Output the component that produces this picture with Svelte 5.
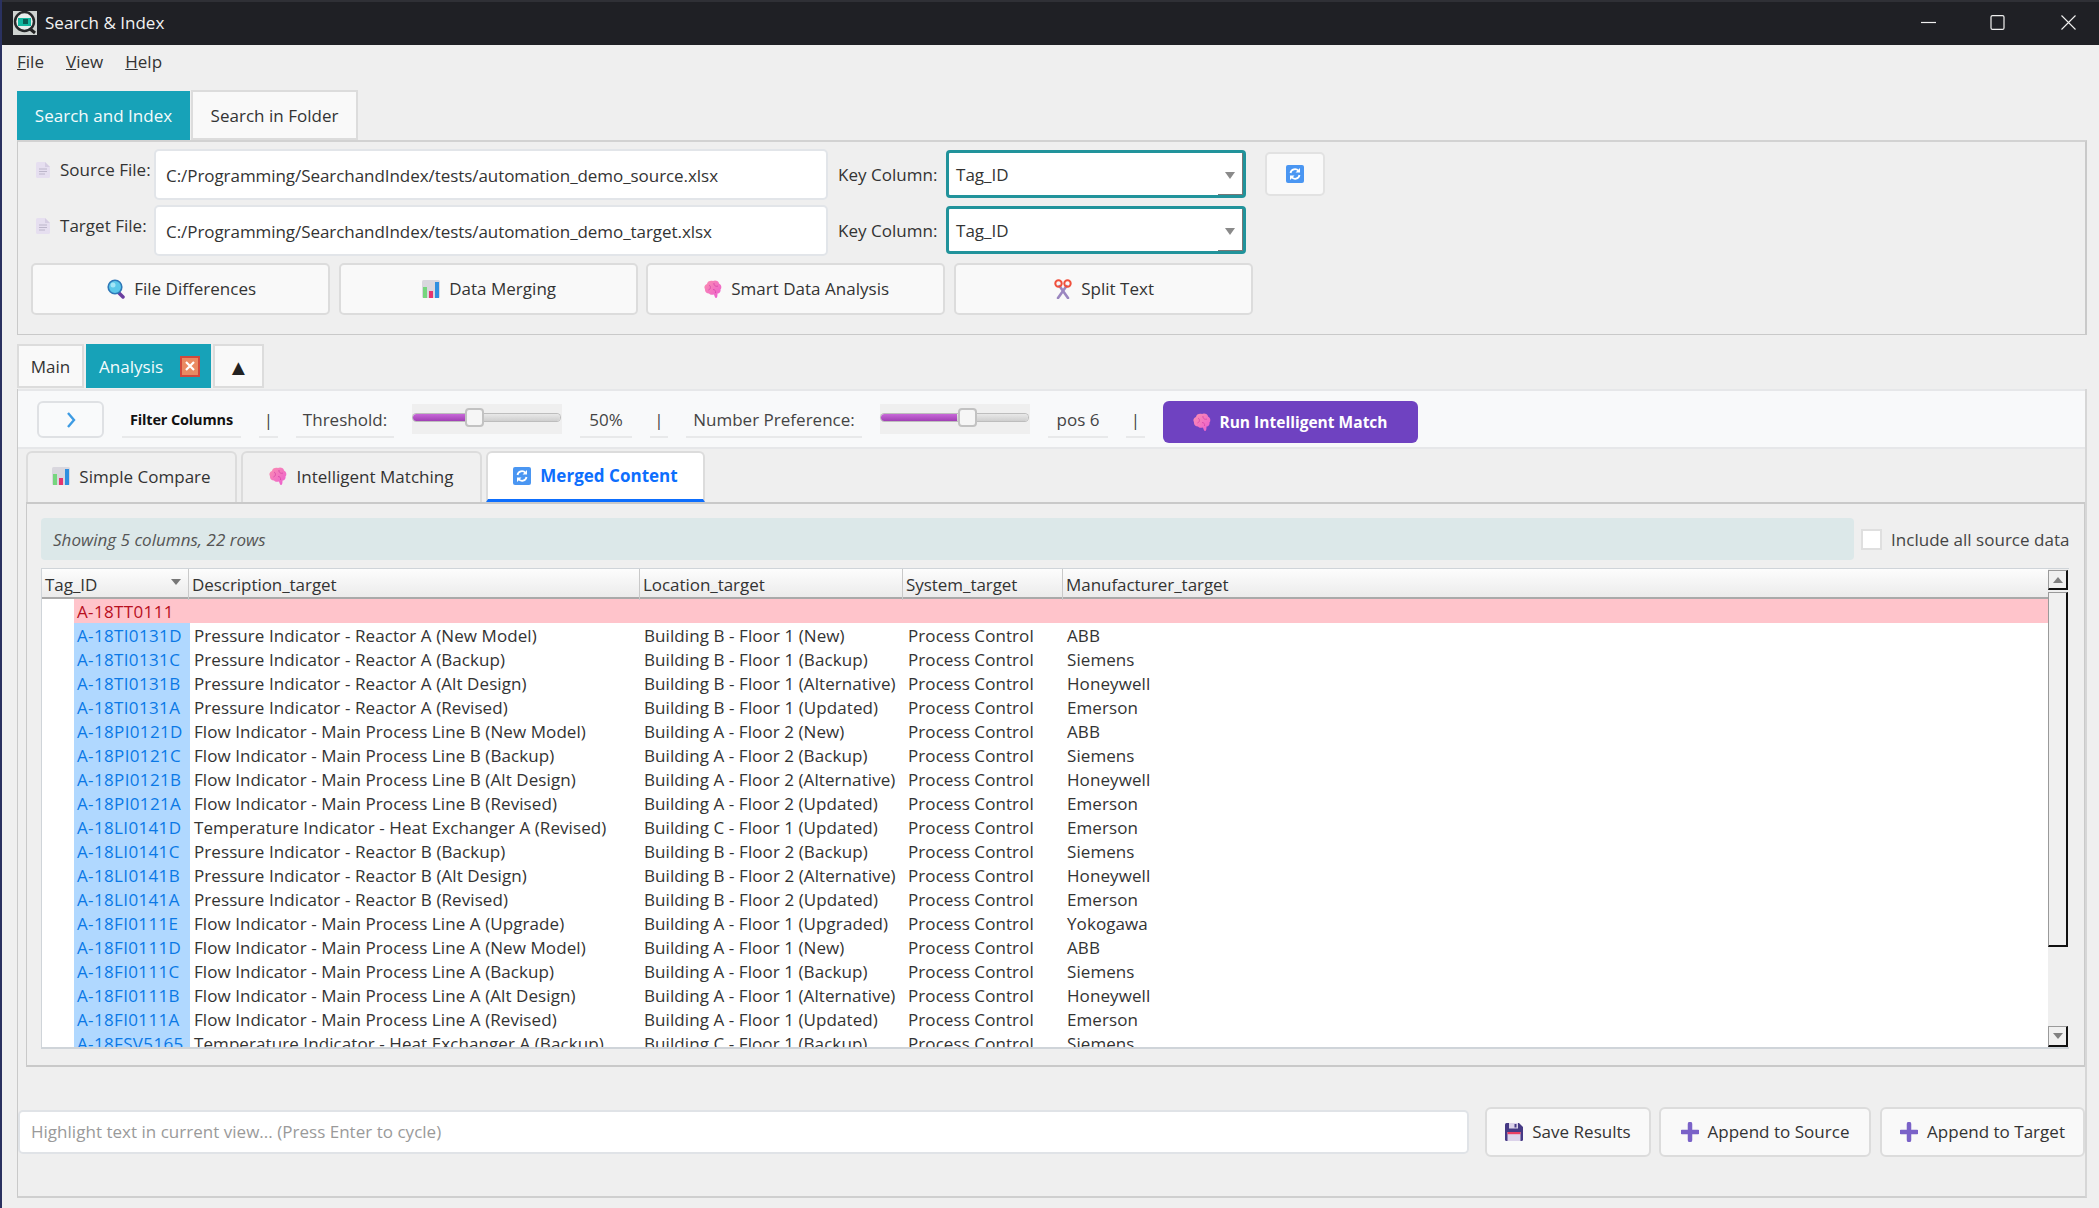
<script>
  const rows = [
    ['A-18TI0131D','Pressure Indicator - Reactor A (New Model)','Building B - Floor 1 (New)','Process Control','ABB'],
    ['A-18TI0131C','Pressure Indicator - Reactor A (Backup)','Building B - Floor 1 (Backup)','Process Control','Siemens'],
    ['A-18TI0131B','Pressure Indicator - Reactor A (Alt Design)','Building B - Floor 1 (Alternative)','Process Control','Honeywell'],
    ['A-18TI0131A','Pressure Indicator - Reactor A (Revised)','Building B - Floor 1 (Updated)','Process Control','Emerson'],
    ['A-18PI0121D','Flow Indicator - Main Process Line B (New Model)','Building A - Floor 2 (New)','Process Control','ABB'],
    ['A-18PI0121C','Flow Indicator - Main Process Line B (Backup)','Building A - Floor 2 (Backup)','Process Control','Siemens'],
    ['A-18PI0121B','Flow Indicator - Main Process Line B (Alt Design)','Building A - Floor 2 (Alternative)','Process Control','Honeywell'],
    ['A-18PI0121A','Flow Indicator - Main Process Line B (Revised)','Building A - Floor 2 (Updated)','Process Control','Emerson'],
    ['A-18LI0141D','Temperature Indicator - Heat Exchanger A (Revised)','Building C - Floor 1 (Updated)','Process Control','Emerson'],
    ['A-18LI0141C','Pressure Indicator - Reactor B (Backup)','Building B - Floor 2 (Backup)','Process Control','Siemens'],
    ['A-18LI0141B','Pressure Indicator - Reactor B (Alt Design)','Building B - Floor 2 (Alternative)','Process Control','Honeywell'],
    ['A-18LI0141A','Pressure Indicator - Reactor B (Revised)','Building B - Floor 2 (Updated)','Process Control','Emerson'],
    ['A-18FI0111E','Flow Indicator - Main Process Line A (Upgrade)','Building A - Floor 1 (Upgraded)','Process Control','Yokogawa'],
    ['A-18FI0111D','Flow Indicator - Main Process Line A (New Model)','Building A - Floor 1 (New)','Process Control','ABB'],
    ['A-18FI0111C','Flow Indicator - Main Process Line A (Backup)','Building A - Floor 1 (Backup)','Process Control','Siemens'],
    ['A-18FI0111B','Flow Indicator - Main Process Line A (Alt Design)','Building A - Floor 1 (Alternative)','Process Control','Honeywell'],
    ['A-18FI0111A','Flow Indicator - Main Process Line A (Revised)','Building A - Floor 1 (Updated)','Process Control','Emerson'],
    ['A-18FSV5165','Temperature Indicator - Heat Exchanger A (Backup)','Building C - Floor 1 (Backup)','Process Control','Siemens']
  ];
  const headers = ['Description_target','Location_target','System_target','Manufacturer_target'];
  const fields = [
    { label: 'Source File:', path: 'C:/Programming/SearchandIndex/tests/automation_demo_source.xlsx' },
    { label: 'Target File:', path: 'C:/Programming/SearchandIndex/tests/automation_demo_target.xlsx' }
  ];
  const threshold = 36;
  const preference = 52;
</script>

{#snippet doc()}
  <svg class="i-doc" viewBox="0 0 14 16"><path d="M0 1.500Q0 0 1.500 0H9L14 5V14.500Q14 16 12.500 16H1.500Q0 16 0 14.500Z" fill="#e6dff0"/><path d="M9 0L14 5H9Z" fill="#d5cde2"/><path d="M3 7H11M3 9.500H11M3 12H9" stroke="#bcb6ca" stroke-width="1"/></svg>
{/snippet}
{#snippet search()}
  <svg class="ic" viewBox="0 0 18 20"><path d="M11 13L16 18" stroke="#6b3fa0" stroke-width="3.500" stroke-linecap="round"/><circle cx="8" cy="8" r="6.800" fill="#5cc8ea" stroke="#2f78b8" stroke-width="1.600"/><circle cx="6" cy="6" r="2.500" fill="#a5e6f7"/></svg>
{/snippet}
{#snippet chart()}
  <svg class="ic" viewBox="0 0 18 20"><rect x="0" y="1" width="18" height="18" rx="1.500" fill="#d9d7de"/><rect x="1" y="8" width="4" height="11" fill="#76d67e"/><rect x="7" y="12" width="4" height="7" fill="#e5356f"/><rect x="13" y="3" width="4" height="16" fill="#2f8fe0"/></svg>
{/snippet}
{#snippet brain()}
  <svg class="ic" viewBox="0 0 18 20"><defs><linearGradient id="bg" x1="0" y1="0" x2="1" y2="1"><stop offset="0" stop-color="#fb8fb0"/><stop offset="1" stop-color="#ec5cd0"/></linearGradient></defs><path d="M3 5C3 2 7 1 9 2C11 .5 15 2 15 4.500C17.500 5.500 18 9 16.500 10.500C17 13 15 15 13.500 14.500C13.500 16.500 13.500 19 12 19C11 19 10.500 17 10 15.500C8 16 6 16 5 14.500C2.500 14.500 .5 12 1 10C-.5 8 1 5.500 3 5Z" fill="url(#bg)"/><path d="M5 6C7 7 7 10 4.500 11M10 4C9.500 6.500 12 8 14 7M9 10.500C11 10.500 12 12 11.500 14" stroke="#d849a8" fill="none" stroke-width=".9"/></svg>
{/snippet}
{#snippet scissors()}
  <svg class="ic" viewBox="0 0 18 20"><path d="M5.500 7L14 19M12.500 7L4 19" stroke="#9b87c0" stroke-width="2.600" stroke-linecap="round"/><circle cx="4.500" cy="4.500" r="3.200" fill="none" stroke="#f0503c" stroke-width="2"/><circle cx="13.500" cy="4.500" r="3.200" fill="none" stroke="#f0503c" stroke-width="2"/></svg>
{/snippet}
{#snippet refresh()}
  <svg class="ic" viewBox="0 0 18 20"><rect y="1" width="18" height="18" rx="2" fill="#4a96f2"/><path d="M4.500 9A4.500 4.500 0 0 1 12.500 7M13.500 11A4.500 4.500 0 0 1 5.500 13" fill="none" stroke="#fff" stroke-width="1.800"/><path d="M14 4V8.500H9.500ZM4 16V11.500H8.500Z" fill="#fff"/></svg>
{/snippet}
{#snippet save()}
  <svg class="ic" viewBox="0 0 18 20"><path d="M0 2.500Q0 1 1.500 1H14L18 5V17.500Q18 19 16.500 19H1.500Q0 19 0 17.500Z" fill="#463a85"/><rect x="4" y="1" width="9" height="5.500" fill="#dcd3ea"/><rect x="9.500" y="2" width="2" height="3.500" fill="#463a85"/><rect x="2.500" y="10" width="13" height="9" fill="#dcd3ea"/><rect x="2.500" y="10" width="13" height="2.200" fill="#ea3f63"/></svg>
{/snippet}
{#snippet plus()}
  <svg class="ic" viewBox="0 0 18 20"><path d="M9 2V18M1 10H17" stroke="#7a62c8" stroke-width="4.500" stroke-linecap="round"/></svg>
{/snippet}

<div class="win">
  <header class="titlebar">
    <svg class="appicon" viewBox="0 0 24 24"><rect width="24" height="24" fill="#cfd3d1"/><path d="M16 17L22 22" stroke="#222" stroke-width="3"/><circle cx="11.500" cy="10.500" r="9.500" fill="#e8eeec" stroke="#26282a" stroke-width="2.500"/><path d="M5 7H18V15H5Z" fill="#12b8a0"/><rect x="10" y="8" width="5" height="5" fill="#0c5f55"/></svg>
    <span class="apptitle">Search &amp; Index</span>
    <div class="controls">
      <svg viewBox="0 0 15 15"><path d="M0 7.500H15" stroke="#f0f0f0" stroke-width="1.200"/></svg>
      <svg viewBox="0 0 15 15"><rect x="1" y=".6" width="13" height="13.800" rx="1.500" fill="none" stroke="#f0f0f0" stroke-width="1.200"/></svg>
      <svg viewBox="0 0 15 15"><path d="M.5 .5L14.500 14.500M14.500 .5L.5 14.500" stroke="#f0f0f0" stroke-width="1.100"/></svg>
    </div>
  </header>

  <nav class="menubar">
    <span><u>F</u>ile</span><span><u>V</u>iew</span><span><u>H</u>elp</span>
  </nav>

  <main class="main">
    <div class="toptabs">
      <div class="tab on t1">Search and Index</div>
      <div class="tab t2">Search in Folder</div>
    </div>

    <section class="toppanel">
      <div class="fields">
        {#each fields as f, n}
          <div class="flabel">{@render doc()}<span>{f.label}</span></div>
          <div class="input">{f.path}</div>
          <div class="keylabel">Key Column:</div>
          <div class="select"><span>Tag_ID</span><i class="caret"></i></div>
          {#if n === 0}
            <div class="refresh">{@render refresh()}</div>
          {:else}
            <div></div>
          {/if}
        {/each}
      </div>
      <div class="actions">
        <div class="btn">{@render search()}File Differences</div>
        <div class="btn">{@render chart()}Data Merging</div>
        <div class="btn">{@render brain()}Smart Data Analysis</div>
        <div class="btn">{@render scissors()}Split Text</div>
      </div>
    </section>

    <div class="midtabs">
      <div class="tab m1">Main</div>
      <div class="tab on m2"><span>Analysis</span><b class="close"><svg viewBox="0 0 12 12"><path d="M2 2L10 10M10 2L2 10" stroke="#fff" stroke-width="2.200"/></svg></b></div>
      <div class="tab m3">▲</div>
    </div>

    <section class="lower">
      <div class="toolbar">
        <div class="chev"><svg viewBox="0 0 10 18"><path d="M2 2L8 9L2 16" fill="none" stroke="#3d9be3" stroke-width="2.400"/></svg></div>
        <div class="tl bold" style="width:119px">Filter Columns</div>
        <div class="tl" style="width:19px">|</div>
        <div class="tl" style="width:98px">Threshold:</div>
        <div class="slider"><div class="groove"><div class="fill" style="width:{threshold}%"></div><div class="handle" style="left:calc({threshold}% - 1px)"></div></div></div>
        <div class="tl" style="width:52px">50%</div>
        <div class="tl" style="width:18px">|</div>
        <div class="tl" style="width:176px">Number Preference:</div>
        <div class="slider"><div class="groove"><div class="fill" style="width:{preference}%"></div><div class="handle" style="left:calc({preference}% + 1px)"></div></div></div>
        <div class="tl" style="width:60px">pos 6</div>
        <div class="tl" style="width:19px">|</div>
        <div class="run">{@render brain()}Run Intelligent Match</div>
      </div>

      <div class="subtabs">
        <div class="sub s1">{@render chart()}Simple Compare</div>
        <div class="sub s2">{@render brain()}Intelligent Matching</div>
        <div class="sub s3 act">{@render refresh()}Merged Content</div>
      </div>

      <div class="inner">
        <div class="inforow">
          <div class="info">Showing 5 columns, 22 rows</div>
          <div class="check"></div>
          <div class="checklabel">Include all source data</div>
        </div>

        <div class="table">
          <div class="tmain">
            <div class="thead">
              <div class="th tag"><span>Tag_ID</span><i class="sort"></i></div>
              {#each headers as h}<div class="th">{h}</div>{/each}
            </div>
            <div class="tbody">
              <div class="tr miss"><div></div><div class="td id">A-18TT0111</div><div></div><div></div><div></div><div></div></div>
              {#each rows as r}
                <div class="tr">
                  <div></div>
                  <div class="td id blue">{r[0]}</div>
                  <div class="td">{r[1]}</div>
                  <div class="td">{r[2]}</div>
                  <div class="td">{r[3]}</div>
                  <div class="td">{r[4]}</div>
                </div>
              {/each}
            </div>
          </div>
          <div class="scroll">
            <div class="sbtn up"><i></i></div>
            <div class="thumb"></div>
            <div class="track"></div>
            <div class="sbtn down"><i></i></div>
          </div>
        </div>
      </div>

      <div class="bottom">
        <div class="hl">Highlight text in current view... (Press Enter to cycle)</div>
        <div class="bbtn b1">{@render save()}Save Results</div>
        <div class="bbtn b2">{@render plus()}Append to Source</div>
        <div class="bbtn b3">{@render plus()}Append to Target</div>
      </div>
    </section>
  </main>
</div>

<style>
  :global(body) { margin: 0; background: #efefef; }
  .win {
    width: 2099px; height: 1208px; box-sizing: border-box; overflow: hidden;
    border-left: 2px solid #2a3160; background: #efefef; display: flex; flex-direction: column;
    font-family: "Open Sans", "Noto Sans", sans-serif; font-size: 17px; letter-spacing: .02px; color: #333;
  }
  .titlebar {
    height: 45px; box-sizing: border-box; flex: none; background: #1f2025; border-top: 2px solid #2f3036;
    display: flex; align-items: center; padding: 0 23px 2px 13px; margin-left: -2px; color: #f2f2f2;
  }
  .appicon { width: 24px; height: 24px; }
  .apptitle { margin-left: 8px; font-size: 17px; }
  .controls { margin-left: auto; display: flex; gap: 54px; }
  .controls svg { width: 15px; height: 15px; display: block; }
  .controls svg:nth-child(2) { margin-right: 2px; }
  .menubar { height: 45px; box-sizing: border-box; flex: none; display: flex; padding: 6px 0 0 15px; gap: 22px; line-height: 22px; color: #333; }
  .main { flex: 1; min-height: 0; display: flex; flex-direction: column; padding: 0 12px 0 15px; }

  .tab { box-sizing: border-box; display: flex; align-items: center; justify-content: center; background: #f9f9f9; border: 2px solid #dcdcdc; color: #333; }
  .tab.on { background: #17a2b8; border-color: #17a2b8; color: #f4fbfc; }
  .toptabs { display: flex; gap: 1px; height: 50px; flex: none; }
  .t1 { width: 173px; height: 49px; margin-top: 1px; }
  .t2 { width: 167px; }

  .toppanel { box-sizing: border-box; height: 195px; flex: none; border: 1px solid #c9c9c9; border-top: 2px solid #d2d2d2; border-right-width: 2px; padding-top: 7px; }
  .fields { display: grid; grid-template-columns: 136px 674px 118px 300px 78px; grid-auto-rows: 51px; row-gap: 5px; }
  .flabel { display: flex; gap: 10px; padding-left: 18px; padding-top: 10px; line-height: 22px; }
  .i-doc { width: 14px; height: 16px; margin-top: 3px; flex: none; }
  .input { box-sizing: border-box; background: #fff; border: 2px solid #e2e5e9; border-radius: 5px; padding: 14px 0 0 10px; line-height: 22px; white-space: nowrap; letter-spacing: -.06px; }
  .keylabel { padding: 15px 0 0 10px; line-height: 22px; }
  .select { position: relative; box-sizing: border-box; height: 48px; margin-top: 1px; background: #fff; border: 3px solid #21939b; border-radius: 4px; padding: 11px 0 0 7px; line-height: 22px; }
  .select::after { content: ""; position: absolute; right: 0; bottom: 0; top: 0; width: 24px; border-right: 1px solid #777; border-bottom: 1px solid #777; }
  .caret { position: absolute; right: 8px; top: 19px; border-left: 5.500px solid transparent; border-right: 5.500px solid transparent; border-top: 7px solid #8a8a8a; }
  .refresh { box-sizing: border-box; width: 60px; height: 44px; margin: 3px 0 0 19px; background: #f9f9f9; border: 2px solid #e2e2e2; border-radius: 5px; display: flex; align-items: center; justify-content: center; }
  .ic { width: 18px; height: 20px; flex: none; }
  .actions { display: grid; grid-template-columns: repeat(4, 299.250px); column-gap: 8.250px; padding-left: 13px; margin-top: 7px; }
  .btn { box-sizing: border-box; height: 52px; display: flex; align-items: center; justify-content: center; gap: 9px; background: #f9f9f9; border: 2px solid #dcdcdc; border-radius: 5px; padding: 0 0 1px 2px; }

  .midtabs { display: flex; gap: 2px; height: 44px; margin-top: 9px; flex: none; }
  .m1 { width: 67px; }
  .m2 { width: 125px; justify-content: flex-start; padding-left: 11px; gap: 17px; }
  .m3 { width: 51px; color: #222; font-size: 22px; }
  .close { width: 20px; height: 21px; box-sizing: border-box; background: #ea8a62; border: 2px solid #d2493c; display: flex; align-items: center; justify-content: center; }
  .close svg { width: 12px; height: 12px; }

  .lower { flex: none; height: 809px; margin-top: 1px; box-sizing: border-box; border-left: 1px solid #c9c9c9; border-bottom: 2px solid #cfcfcf; border-right: 2px solid #d6d6d6; display: flex; flex-direction: column; }
  .toolbar { box-sizing: border-box; height: 60px; flex: none; background: #f8f9fa; border-top: 2px solid #e6e7e9; border-bottom: 2px solid #e6e7e9; display: flex; gap: 18px; padding: 10px 0 0 19px; align-items: flex-start; }
  .chev { box-sizing: border-box; width: 67px; height: 37px; background: #f9fafb; border: 2px solid #dfe1e4; border-radius: 6px; display: flex; align-items: center; justify-content: center; }
  .chev svg { width: 10px; height: 18px; }
  .tl { box-sizing: border-box; height: 37px; border-bottom: 2px solid #e8e9ea; text-align: center; line-height: 37px; color: #444; flex: none; white-space: nowrap; }
  .tl.bold { font-weight: 700; color: #111; font-size: 14.500px; letter-spacing: -.15px; }
  .slider { box-sizing: border-box; width: 150px; height: 30px; margin-top: 3px; background: #efefef; padding: 10px 2px 0 1px; flex: none; }
  .groove { position: relative; height: 7px; border-radius: 4px; background: linear-gradient(#e8e8e8, #cfcfcf); box-shadow: 0 0 0 1px #bdbdbd; }
  .fill { height: 100%; border-radius: 4px 0 0 4px; background: linear-gradient(#c868d8, #a040b4); }
  .handle { position: absolute; top: -6px; width: 19px; height: 19px; box-sizing: border-box; background: #f6f6f6; border: 2px solid #c2c2c2; border-radius: 4px; }
  .run { box-sizing: border-box; width: 255px; height: 42px; background: #6f42c1; border-radius: 6px; color: #fff; font-weight: 700; font-size: 15.500px; display: flex; align-items: center; justify-content: center; gap: 8px; flex: none; }

  .subtabs { display: flex; gap: 4px; height: 53px; flex: none; padding: 2px 0 0 8px; box-sizing: border-box; }
  .sub { box-sizing: border-box; display: flex; align-items: center; justify-content: center; gap: 9px; background: #f0f0f0; border: 2px solid #dcdcdc; border-bottom: none; border-radius: 6px 6px 0 0; padding-bottom: 3px; }
  .s1 { width: 211px; } .s2 { width: 241px; } .s3 { width: 219px; }
  .act { background: #fff; color: #0d6efd; font-weight: 700; border-bottom: 3px solid #0d6efd; padding-bottom: 1px; }

  .inner { box-sizing: border-box; height: 565px; flex: none; margin-left: 8px; border: 1px solid #c9c9c9; border-top-width: 2px; border-bottom-width: 2px; padding: 14px 16px 0 14px; display: flex; flex-direction: column; }
  .inforow { display: flex; align-items: center; height: 42px; flex: none; }
  .info { box-sizing: border-box; width: 1813px; height: 42px; background: #dce8e9; border-radius: 4px; padding-left: 12px; line-height: 43px; font-style: italic; color: #555; flex: none; }
  .check { box-sizing: border-box; width: 21px; height: 21px; margin-left: 7px; background: #fff; border: 2px solid #dfdfdf; flex: none; }
  .checklabel { margin-left: 9px; color: #444; white-space: nowrap; }

  .table { margin-top: 8px; height: 481px; flex: none; display: flex; border-left: 1px solid #cfd4d9; border-bottom: 2px solid #cfd4d9; border-top: 1px solid #cfd4d9; box-sizing: border-box; background: #fff; width: 2028px; }
  .tmain { width: 2006px; flex: none; display: flex; flex-direction: column; overflow: hidden; }
  .thead { display: grid; grid-template-columns: 147px 451px 263px 160px 1fr; height: 30px; flex: none; box-sizing: border-box; border-bottom: 2px solid #a9a9a9; background: linear-gradient(#fdfdfd, #ebebeb); }
  .th { box-sizing: border-box; border-right: 1px solid #c9c9c9; padding-left: 3px; line-height: 31px; position: relative; color: #333; letter-spacing: -.05px; }
  .th:last-child { border-right: none; }
  .sort { position: absolute; right: 7px; top: 10px; border-left: 5.500px solid transparent; border-right: 5.500px solid transparent; border-top: 6px solid #777; }
  .tbody { flex: 1; min-height: 0; overflow: hidden; }
  .tr { display: grid; grid-template-columns: 32px 116px 450px 264px 159px 1fr; height: 24px; line-height: 26px; letter-spacing: .08px; }
  .td { box-sizing: border-box; padding-left: 4px; white-space: nowrap; color: #333; overflow: hidden; height: 24px; }
  .td.id { padding-left: 3px; letter-spacing: .35px; }
  .miss { background: linear-gradient(90deg, #fff 32px, #ffc4cb 32px); height: 25px; margin-top: -1px; padding-top: 1px; box-sizing: border-box; }
  .miss .id { color: #b80f1e; }
  .blue { background: #b0d8ff; color: #0a78e6; }

  .scroll { width: 21px; flex: none; background: #efefef; display: flex; flex-direction: column; }
  .sbtn { box-sizing: border-box; width: 20px; flex: none; background: #f0f0f0; border-top: 1px solid #9a9a9a; border-left: 1px solid #9a9a9a; border-right: 2px solid #111; border-bottom: 2px solid #111; display: flex; align-items: center; justify-content: center; }
  .up { height: 20px; margin-top: 1px; }
  .down { height: 21px; }
  .sbtn i { border-left: 5px solid transparent; border-right: 5px solid transparent; }
  .up i { border-bottom: 6px solid #808080; }
  .down i { border-top: 6px solid #808080; }
  .thumb { box-sizing: border-box; width: 20px; height: 355px; margin-top: 2px; flex: none; background: #f0f0f0; border-top: 1px solid #9a9a9a; border-left: 1px solid #9a9a9a; border-right: 2px solid #111; border-bottom: 2px solid #111; }
  .track { flex: 1; }

  .bottom { flex: 1; min-height: 0; display: flex; align-items: flex-start; padding: 40px 0 0 0; }
  .hl { box-sizing: border-box; width: 1451px; height: 44px; margin-top: 3px; background: #fff; border: 2px solid #e0e3e7; border-radius: 5px; padding-left: 11px; line-height: 40px; color: #9a9a9a; flex: none; }
  .bbtn { box-sizing: border-box; height: 50px; background: #f9f9f9; border: 2px solid #dcdcdc; border-radius: 6px; display: flex; align-items: center; justify-content: center; gap: 9px; flex: none; padding-bottom: 1px; }
  .b1 { width: 166px; margin-left: 16px; }
  .b2 { width: 212px; margin-left: 8px; }
  .b3 { width: 205px; margin-left: 9px; }
</style>
